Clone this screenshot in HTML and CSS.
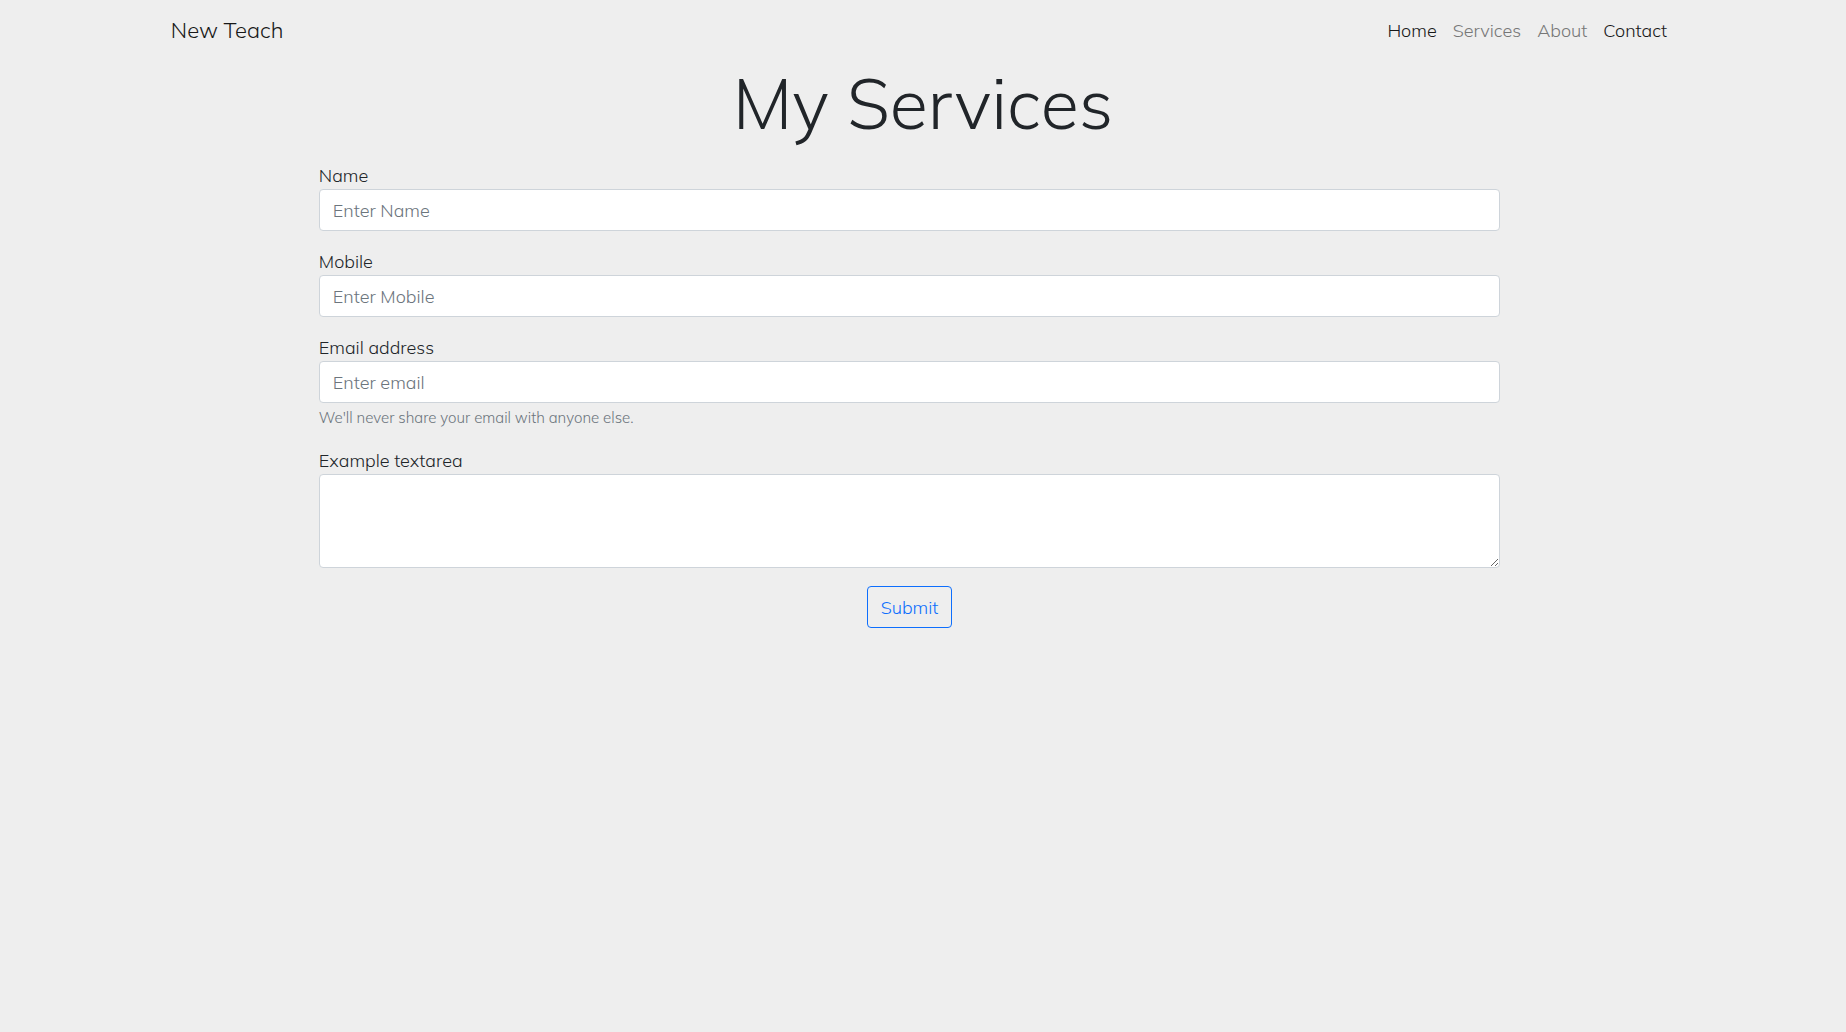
FILE: index.html
```html
<!DOCTYPE html>
<html lang="en">
<head>
<meta charset="utf-8">
<meta name="viewport" content="width=device-width, initial-scale=1">
<title>My Services</title>
<link rel="stylesheet" href="styles.css">
</head>
<body>
<nav class="navbar">
  <a class="brand" href="#">New Teach</a>
  <ul class="nav-list">
    <li><a class="nav-link active" href="#">Home</a></li>
    <li><a class="nav-link" href="#">Services</a></li>
    <li><a class="nav-link" href="#">About</a></li>
    <li><a class="nav-link active" href="#">Contact</a></li>
  </ul>
</nav>
<main>
  <h1 class="title">My Services</h1>
  <form class="form">
    <div class="group">
      <label for="name">Name</label>
      <input class="control" type="text" id="name" placeholder="Enter Name">
    </div>
    <div class="group">
      <label for="mobile">Mobile</label>
      <input class="control" type="tel" id="mobile" placeholder="Enter Mobile">
    </div>
    <div class="group">
      <label for="email">Email address</label>
      <input class="control" type="email" id="email" placeholder="Enter email" aria-describedby="email-help">
      <small class="help" id="email-help">We'll never share your email with anyone else.</small>
    </div>
    <div class="group">
      <label for="message">Example textarea</label>
      <textarea class="control area" id="message" rows="3"></textarea>
    </div>
    <button class="submit" type="submit">Submit</button>
  </form>
</main>
</body>
</html>
```
FILE: styles.css
```css
*, *::before, *::after { box-sizing: border-box; }

body {
  margin: 0;
  min-height: 100vh;
  background: #eeeeee;
  color: #212529;
  font: 300 18px/27px Muli, Mulish, Lato, sans-serif;
}

a { text-decoration: none; }

.navbar {
  display: flex;
  align-items: center;
  justify-content: space-between;
  width: 83.3333%;
  margin: 0 auto;
  padding: 9px 17px;
}

.brand { padding-bottom: 2px; color: #181818; font-size: 22px; line-height: 32px; }

.nav-list { display: flex; margin: 0; padding: 0; list-style: none; }

.nav-link { display: block; padding: 8px; color: #777777; }

.nav-link.active { color: #181818; }

.title {
  margin: 0 0 17px;
  font-size: 70px;
  font-weight: 300;
  line-height: 84px;
  text-align: center;
}

.form {
  width: 64%;
  margin-left: 17.27%;
}

.group { display: flex; flex-direction: column; margin-bottom: 17px; }

.control {
  width: 100%;
  height: 42px;
  padding: 6px 13px;
  border: 1px solid #ced4da;
  border-radius: 4px;
  background: #ffffff;
  color: #495057;
  font: inherit;
}

.control::placeholder { color: #6c757d; opacity: 1; }

.area { height: 94px; resize: vertical; }

.help { margin-top: 3px; color: #6c757d; font-size: 15px; line-height: 24px; }

.submit {
  display: block;
  margin: 18px auto 0;
  padding: 7px 13px 6px;
  border: 1px solid #0d6efd;
  border-radius: 4px;
  background: transparent;
  color: #0d6efd;
  font: inherit;
}
```
